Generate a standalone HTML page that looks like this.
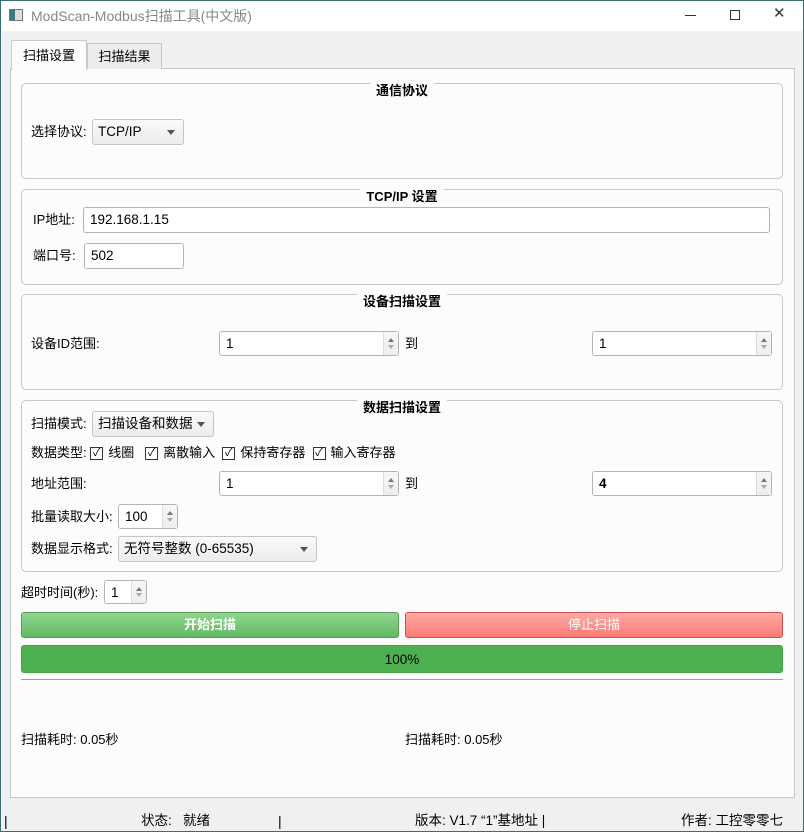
<!DOCTYPE html><html><head><meta charset="utf-8"><style>
*{box-sizing:border-box;margin:0;padding:0}
body{width:804px;height:832px;background:#f0f0f0;font-family:"Liberation Sans","Noto Sans CJK SC",sans-serif;font-size:13px;color:#000;position:relative;overflow:hidden}
.a{position:absolute}
.frame{left:0;top:0;width:804px;height:832px;border:1px solid #3a6f6f;z-index:9;pointer-events:none}
.title{left:0;top:0;width:804px;height:31px;background:#fff}
.grp{position:absolute;left:21px;width:762px;border:1px solid #c8c8c8;border-radius:5px;background:#fcfcfc}
.gt{position:absolute;left:0;right:0;top:-1px;text-align:center;font-weight:bold;font-size:13px;line-height:14px}
.gt span{background:#fcfcfc;padding:0 6px}
.in{position:absolute;border:1px solid #b4b4b4;border-radius:3px;background:#fff;padding-left:6px;line-height:23px;font-size:13.5px}
.cb{position:absolute;border:1px solid #c4c4c4;border-radius:3px;background:linear-gradient(#fafafa,#ececec);padding-left:5px;line-height:23px;font-size:13.5px}
.cb:after{content:"";position:absolute;right:8px;top:10px;border:4px solid transparent;border-top:5px solid #555}
.sp:after{content:"";position:absolute;right:0;top:0;width:14px;height:100%;border-left:1px solid #ddd;background:linear-gradient(#f6f6f6,#eee)}
.up,.dn{position:absolute;right:4px;z-index:2;border:3px solid transparent;width:0;height:0}
.up{border-bottom:4px solid #777;top:3px}.dn{border-top:4px solid #aaa;bottom:3px}
.lb{position:absolute;font-size:13px;line-height:16px;white-space:nowrap}
.row{display:flex;align-items:center}
.chk{display:inline-block;width:13px;height:13px;border:1px solid #333;background:#fff;font-size:11px;line-height:11px;text-align:center;margin:0 5px 0 0}
</style></head><body>
<div class="a frame"></div>
<div class="a title"></div>
<div class="a" style="left:9px;top:9px;width:14px;height:12px;border:1px solid #777;background:linear-gradient(90deg,#3a7a7a 40%,#ddd 40%)"></div>
<div class="a" style="left:31px;top:7px;color:#888;font-size:14px;line-height:18px">ModScan-Modbus扫描工具(中文版)</div>
<div class="a" style="left:685px;top:15px;width:11px;height:1px;background:#333"></div>
<div class="a" style="left:730px;top:10px;width:10px;height:10px;border:1px solid #333"></div>
<div class="a" style="left:773px;top:6px;font-size:15px;line-height:16px;color:#333">✕</div>
<div class="a" style="left:10px;top:68px;width:785px;height:730px;background:#fcfcfc;border:1px solid #c8c8c8"></div>
<div class="a" style="left:87px;top:43px;width:75px;height:26px;background:#ececec;border:1px solid #c8c8c8;border-bottom:none;text-align:center;line-height:26px">扫描结果</div>
<div class="a" style="left:11px;top:40px;width:76px;height:30px;background:#fcfcfc;border:1px solid #c8c8c8;border-bottom:none;text-align:center;line-height:30px">扫描设置</div>

<div class="grp" style="top:83px;height:96px"><div class="gt" style="top:0px"><span>通信协议</span></div></div>
<div class="lb" style="left:31px;top:124px">选择协议:</div>
<div class="cb" style="left:92px;top:119px;width:92px;height:26px">TCP/IP</div>

<div class="grp" style="top:189px;height:96px"><div class="gt" style="top:0px"><span>TCP/IP 设置</span></div></div>
<div class="lb" style="left:33px;top:212px">IP地址:</div>
<div class="in" style="left:83px;top:207px;width:687px;height:26px">192.168.1.15</div>
<div class="lb" style="left:33px;top:248px">端口号:</div>
<div class="in" style="left:84px;top:243px;width:100px;height:26px">502</div>

<div class="grp" style="top:294px;height:96px"><div class="gt" style="top:0px"><span>设备扫描设置</span></div></div>
<div class="lb" style="left:31px;top:336px">设备ID范围:</div>
<div class="in sp" style="left:219px;top:331px;width:180px;height:25px">1<i class="up"></i><i class="dn"></i></div>
<div class="lb" style="left:405px;top:336px">到</div>
<div class="in sp" style="left:592px;top:331px;width:180px;height:25px">1<i class="up"></i><i class="dn"></i></div>

<div class="grp" style="top:400px;height:172px"><div class="gt" style="top:0px"><span>数据扫描设置</span></div></div>
<div class="lb" style="left:31px;top:416px">扫描模式:</div>
<div class="cb" style="left:92px;top:411px;width:122px;height:26px">扫描设备和数据</div>
<div class="lb row" style="left:31px;top:445px">数据类型:&nbsp;<span class="chk">✓</span>线圈&nbsp;&nbsp;&nbsp;<span class="chk">✓</span>离散输入&nbsp;&nbsp;<span class="chk">✓</span>保持寄存器&nbsp;&nbsp;<span class="chk">✓</span>输入寄存器</div>
<div class="lb" style="left:31px;top:476px">地址范围:</div>
<div class="in sp" style="left:219px;top:471px;width:180px;height:25px">1<i class="up"></i><i class="dn"></i></div>
<div class="lb" style="left:405px;top:476px">到</div>
<div class="in sp" style="left:592px;top:471px;width:180px;height:25px;font-weight:bold">4<i class="up"></i><i class="dn"></i></div>
<div class="lb" style="left:31px;top:509px">批量读取大小:</div>
<div class="in sp" style="left:118px;top:504px;width:60px;height:25px">100<i class="up"></i><i class="dn"></i></div>
<div class="lb" style="left:31px;top:541px">数据显示格式:</div>
<div class="cb" style="left:118px;top:536px;width:199px;height:26px">无符号整数 (0-65535)</div>

<div class="lb" style="left:21px;top:585px">超时时间(秒):</div>
<div class="in sp" style="left:104px;top:580px;width:43px;height:24px">1<i class="up"></i><i class="dn"></i></div>

<div class="a" style="left:21px;top:612px;width:378px;height:26px;border:1px solid #5a9e5a;border-radius:3px;background:linear-gradient(#8fd68f,#63b963);color:#fff;text-align:center;line-height:24px;font-weight:bold">开始扫描</div>
<div class="a" style="left:405px;top:612px;width:378px;height:26px;border:1px solid #c85050;border-radius:3px;background:linear-gradient(#ffaaa5,#fb7a74);color:#fff;text-align:center;line-height:24px">停止扫描</div>
<div class="a" style="left:21px;top:645px;width:762px;height:28px;border-radius:3px;background:#4caf50;border:1px solid #45a049;text-align:center;line-height:27px;font-size:13.5px">100%</div>
<div class="a" style="left:21px;top:679px;width:762px;height:2px;border-top:1px solid #a0a0a0;border-bottom:1px solid #fff"></div>
<div class="lb" style="left:21px;top:732px">扫描耗时: 0.05秒</div>
<div class="lb" style="left:405px;top:732px">扫描耗时: 0.05秒</div>

<div class="lb" style="left:4px;top:813px;font-size:14px">|</div>
<div class="lb" style="left:141px;top:813px;font-size:13.5px">状态: &nbsp; 就绪</div>
<div class="lb" style="left:278px;top:813px;font-size:14px">|</div>
<div class="lb" style="left:415px;top:813px;font-size:13.5px">版本: V1.7 “1”基地址 |</div>
<div class="lb" style="left:681px;top:813px;font-size:13.5px">作者: 工控零零七</div>
</body></html>
